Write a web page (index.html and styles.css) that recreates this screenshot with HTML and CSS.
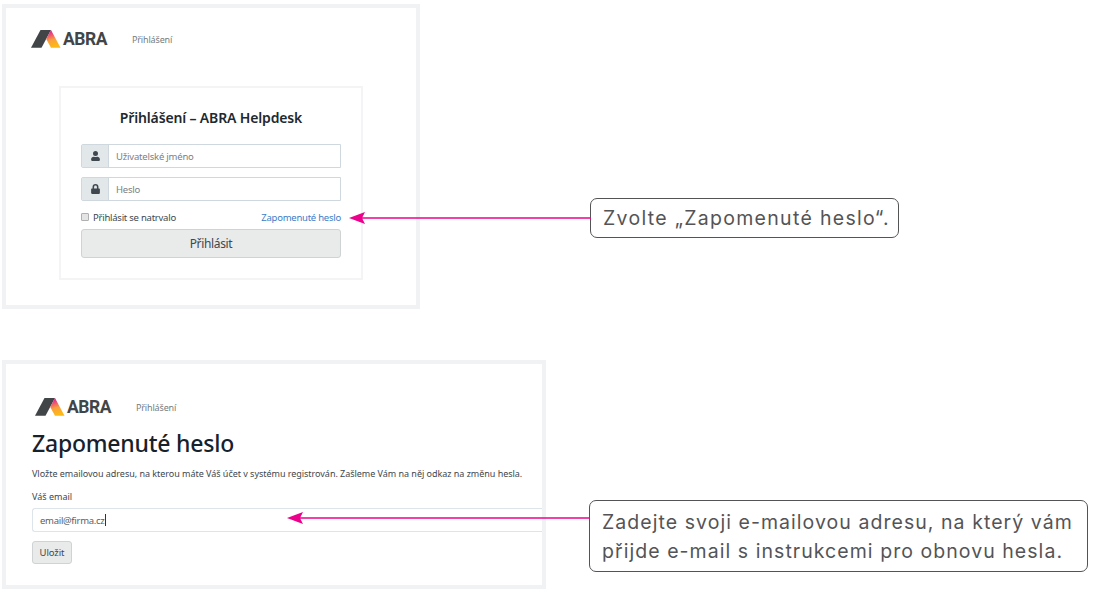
FILE: index.html
```html
<!DOCTYPE html>
<html lang="cs">
<head>
    <meta charset="UTF-8">
    <meta name="viewport" content="width=device-width, initial-scale=1.0">
    <title>ABRA Helpdesk - Zapomenuté heslo</title>
    <link rel="stylesheet" href="styles.css">
</head>
<body>
    <section class="step step-login">
        <div class="screen">
            <div class="navbar">
                <svg class="logo" viewBox="0 0 30 18">
                    <defs>
                        <linearGradient id="flame" x1="0" y1="0" x2="0.25" y2="1">
                            <stop offset="0" stop-color="#e5007e"/>
                            <stop offset="0.2" stop-color="#e8308a"/>
                            <stop offset="0.62" stop-color="#f9a03c"/>
                            <stop offset="1" stop-color="#fdb913"/>
                        </linearGradient>
                    </defs>
                    <path fill="#414548" d="M9.5 0H20L10.5 17.8H0z"/>
                    <path fill="url(#flame)" d="M20 0L29.5 17.8H20L15.2 9z"/>
                </svg>
                <span class="brand">ABRA</span>
                <span class="nav-link">Přihlášení</span>
            </div>

            <div class="login-box">
                <h2>Přihlášení – ABRA Helpdesk</h2>
                <div class="input-group">
                    <div class="addon">
                        <svg width="9" height="10" viewBox="0 0 448 512"><path fill="#3f484f" d="M224 256a128 128 0 1 0 0-256 128 128 0 0 0 0 256zm90 32h-17c-46 21-100 21-146 0h-17C60 288 0 348 0 422v42c0 27 21 48 48 48h352c27 0 48-21 48-48v-42c0-74-60-134-134-134z"/></svg>
                    </div>
                    <div class="field">Uživatelské jméno</div>
                </div>
                <div class="input-group">
                    <div class="addon">
                        <svg width="9" height="10" viewBox="0 0 448 512"><path fill="#3f484f" d="M400 224h-24v-72a152 152 0 0 0-304 0v72H48c-26 0-48 22-48 48v192c0 26 22 48 48 48h352c26 0 48-22 48-48V272c0-26-22-48-48-48zm-104 0H152v-72a72 72 0 0 1 144 0z"/></svg>
                    </div>
                    <div class="field">Heslo</div>
                </div>
                <div class="options">
                    <span class="checkbox"></span>
                    <span class="remember">Přihlásit se natrvalo</span>
                    <a class="forgot">Zapomenuté heslo</a>
                </div>
                <div class="btn btn-login">Přihlásit</div>
            </div>
        </div>

        <svg class="arrow arrow-login" width="242" height="14" viewBox="0 0 242 14">
            <path stroke="#ec008c" stroke-width="1.3" d="M12 7H242"/>
            <path fill="#ec008c" d="M0 7L16 1L13 7L16 13z"/>
        </svg>
        <div class="callout">Zvolte „Zapomenuté heslo“.</div>
    </section>

    <section class="step step-reset">
        <div class="screen">
            <div class="navbar">
                <svg class="logo" viewBox="0 0 30 18">
                    <path fill="#414548" d="M9.5 0H20L10.5 17.8H0z"/>
                    <path fill="url(#flame)" d="M20 0L29.5 17.8H20L15.2 9z"/>
                </svg>
                <span class="brand">ABRA</span>
                <span class="nav-link">Přihlášení</span>
            </div>
            <h1>Zapomenuté heslo</h1>
            <p class="info">Vložte emailovou adresu, na kterou máte Váš účet v systému registrován. Zašleme Vám na něj odkaz na změnu hesla.</p>
            <div class="label">Váš email</div>
            <div class="email">email@firma.cz<i class="caret"></i></div>
            <div class="btn btn-save">Uložit</div>
        </div>

        <svg class="arrow arrow-reset" width="303" height="14" viewBox="0 0 303 14">
            <path stroke="#ec008c" stroke-width="1.3" d="M12 7H303"/>
            <path fill="#ec008c" d="M0 7L16 1L13 7L16 13z"/>
        </svg>
        <div class="callout">
            Zadejte svoji e-mailovou adresu, na který vám<br>
            přijde e-mail s instrukcemi pro obnovu hesla.
        </div>
    </section>
</body>
</html>
```
FILE: styles.css
```css
* {
    box-sizing: border-box;
}

body {
    margin: 0;
    padding: 4px 0 0 2px;
    background: #fff;
    color: #40474d;
    font-family: "Noto Sans", "Open Sans", sans-serif;
    font-size: 9px;
    overflow: hidden;
}

.step {
    position: relative;
    display: flex;
    align-items: flex-start;
    white-space: nowrap;
}

.step-login {
    height: 356px;
}

.screen {
    border: 4px solid #f1f2f4;
    flex: none;
}

.step-login .screen {
    width: 418px;
    height: 305px;
    padding: 20px 0 0 25px;
}

.step-reset .screen {
    width: 544px;
    height: 229px;
    padding: 32px 0 0 26px;
}

/* navbar */
.navbar {
    display: flex;
    align-items: center;
    height: 22px;
}

.step-reset .navbar {
    padding-left: 3px;
}

.logo {
    width: 30px;
    height: 18px;
}

.brand {
    width: 44px;
    margin-left: 2px;
    font-family: Roboto, sans-serif;
    font-size: 17.5px;
    font-weight: 700;
    line-height: 22px;
    letter-spacing: -0.5px;
    color: #414548;
}

.nav-link {
    margin-left: 25px;
    color: #777c80;
    letter-spacing: -0.15px;
}

/* login form */
.login-box {
    width: 304px;
    height: 194px;
    margin: 36px 0 0 28px;
    border: 2px solid #f4f4f6;
    padding: 20px 20px 0;
}

h2 {
    height: 20px;
    margin: 0 0 16px;
    font-size: 14px;
    font-weight: 600;
    line-height: 20px;
    letter-spacing: -0.15px;
    color: #212930;
    text-align: center;
}

.input-group {
    display: flex;
    height: 24px;
    margin-bottom: 9px;
    border: 1px solid #ced8de;
    border-radius: 2px 0 0 2px;
}

.addon {
    width: 27px;
    display: flex;
    align-items: center;
    justify-content: center;
    background: #e2e7ea;
    border-right: 1px solid #ced8de;
}

.field {
    padding-left: 7px;
    font-size: 9.5px;
    line-height: 23px;
    letter-spacing: -0.2px;
    color: #788085;
}

.options {
    display: flex;
    align-items: center;
    height: 14px;
    font-size: 9.5px;
    letter-spacing: -0.24px;
}

.checkbox {
    width: 8px;
    height: 8px;
    border: 1px solid #b0b0b0;
    border-radius: 1px;
    background: #e4e4e4;
}

.remember {
    margin-left: 4px;
}

.forgot {
    margin-left: auto;
    color: #3a7cc9;
}

.btn {
    border: 1px solid #d0d3d4;
    border-radius: 3px;
    background: #e9eaea;
    text-align: center;
}

.btn-login {
    height: 29px;
    margin-top: 5px;
    font-size: 12px;
    line-height: 28px;
    letter-spacing: -0.35px;
}

/* password reset */
h1 {
    margin: 7px 0 0;
    font-size: 23px;
    font-weight: 500;
    line-height: 36px;
    letter-spacing: -0.22px;
    color: #17212a;
}

.info {
    margin: 5px 0 0;
    line-height: 16px;
    letter-spacing: -0.03px;
}

.label {
    margin-top: 7px;
    line-height: 16px;
}

.email {
    display: flex;
    align-items: center;
    height: 24px;
    margin-top: 3px;
    padding-left: 7px;
    border: 1px solid #dde4ea;
    border-width: 1px 0 1px 1px;
    border-radius: 3px 0 0 3px;
    color: #596066;
    font-size: 9.5px;
    letter-spacing: -0.28px;
}

.caret {
    width: 1px;
    height: 12px;
    background: #333;
}

.btn-save {
    width: 40px;
    height: 23px;
    margin-top: 9px;
    line-height: 21px;
    font-size: 9.5px;
    letter-spacing: -0.1px;
}

/* callouts */
.callout {
    border: 1px solid #545456;
    border-radius: 7px;
    background: #fff;
    color: #545456;
    font-family: Inter, sans-serif;
    font-size: 19.5px;
    font-weight: 400;
    letter-spacing: 1.05px;
}

.step-login .callout {
    width: 309px;
    height: 40px;
    margin: 194px 0 0 170px;
    padding-left: 12px;
    line-height: 38px;
    letter-spacing: 1.3px;
}

.step-reset .callout {
    width: 499px;
    height: 72px;
    margin: 140px 0 0 43px;
    padding: 7px 0 0 12px;
    line-height: 29px;
}

.arrow {
    position: absolute;
}

.arrow-login {
    left: 347px;
    top: 207px;
}

.arrow-reset {
    left: 285px;
    top: 151px;
}
```
